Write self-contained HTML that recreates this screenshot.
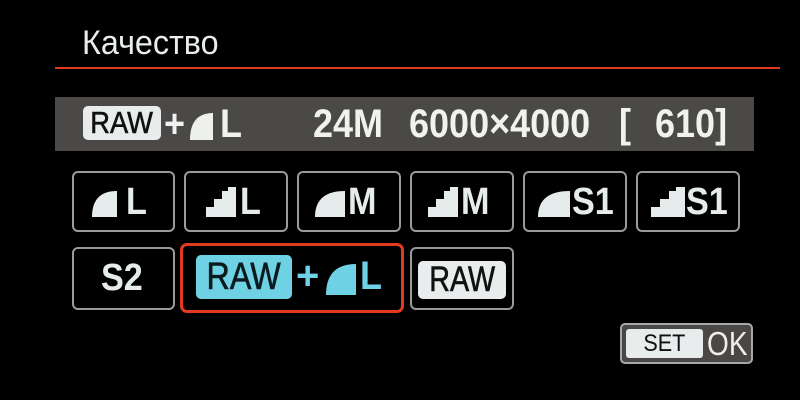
<!DOCTYPE html>
<html><head><meta charset="utf-8"><style>
*{margin:0;padding:0;box-sizing:border-box}
body{width:800px;height:400px;background:#000;position:relative;overflow:hidden;font-family:"Liberation Sans",sans-serif;color:#e6ecec}
.a{position:absolute}
.title{left:82px;top:24px;font-size:34px;color:#e8ecea;transform:scaleX(.95);transform-origin:left}
.line{left:55px;top:67px;width:725px;height:2px;background:#e03a22}
.bar{left:55px;top:97px;width:699px;height:54px;background:#4b4947}
.bt{font-weight:bold;font-size:40px;top:101px;color:#f0f2f0;transform:scaleX(.9);transform-origin:left;line-height:46px}
.box{border:2px solid #9a9a9a;border-radius:6px;background:#000}
.raw{background:#e8ecec;color:#111;border-radius:5px;text-align:center;-webkit-text-stroke:0.6px currentColor}
.L{font-weight:bold;color:#e6ecec;font-size:38px;line-height:40px;top:182px;transform:scaleX(.9);transform-origin:left}
svg{position:absolute}
</style></head><body>
<div class="a title">Качество</div>
<div class="a line"></div>
<div class="a bar"></div>
<div class="a raw" style="left:83px;top:106px;width:78px;height:34px;font-size:31px;line-height:34px"><span style="display:inline-block;transform:scaleX(.88)">RAW</span></div>
<div class="a bt" style="left:164px;">+</div>
<svg style="left:190px;top:113px" width="23" height="27" viewBox="0 0 23 27"><path d="M0 27 Q0 0 23 0 V27Z" fill="#eef0ee"/></svg>
<div class="a bt" style="left:220px;">L</div>
<div class="a bt" style="left:313px;">24M</div>
<div class="a bt" style="left:409px;">6000×4000</div>
<div class="a bt" style="left:619px;">[</div>
<div class="a bt" style="left:655px;">610]</div>

<div class="a box" style="left:72px;top:171px;width:103px;height:61px"></div>
<div class="a box" style="left:184px;top:171px;width:104px;height:61px"></div>
<div class="a box" style="left:297px;top:171px;width:104px;height:61px"></div>
<div class="a box" style="left:410px;top:171px;width:104px;height:61px"></div>
<div class="a box" style="left:523px;top:171px;width:104px;height:61px"></div>
<div class="a box" style="left:636px;top:171px;width:104px;height:61px"></div>

<svg style="left:92px;top:191px" width="25" height="26" viewBox="0 0 25 26"><path d="M0 26 Q0 0 25 0 V26Z" fill="#e6ecec"/></svg>
<svg style="left:206px;top:187px" width="30" height="30" viewBox="0 0 30 30"><path d="M0 30 V20 H8 V12 H16 V4 H22 V0 H30 V30Z" fill="#e6ecec"/></svg>
<svg style="left:315px;top:191px" width="30" height="26" viewBox="0 0 30 26"><path d="M0 26 Q0 0 30 0 V26Z" fill="#e6ecec"/></svg>
<svg style="left:428px;top:187px" width="30" height="30" viewBox="0 0 30 30"><path d="M0 30 V20 H8 V12 H16 V4 H22 V0 H30 V30Z" fill="#e6ecec"/></svg>
<svg style="left:538px;top:191px" width="32" height="26" viewBox="0 0 32 26"><path d="M0 26 Q0 0 32 0 V26Z" fill="#e6ecec"/></svg>
<svg style="left:651px;top:187px" width="34" height="30" viewBox="0 0 34 30"><path d="M0 30 V20 H9 V12 H18 V4 H25 V0 H34 V30Z" fill="#e6ecec"/></svg>

<div class="a L" style="left:126px;">L</div>
<div class="a L" style="left:240px;">L</div>
<div class="a L" style="left:348px;">M</div>
<div class="a L" style="left:461px;">M</div>
<div class="a L" style="left:572px;">S1</div>
<div class="a L" style="left:686px;">S1</div>

<div class="a box" style="left:72px;top:247px;width:103px;height:63px"></div>
<div class="a L" style="left:101px;top:258px;">S2</div>
<div class="a" style="left:180px;top:243px;width:224px;height:70px;border:3px solid #e23a20;border-radius:7px"></div>
<div class="a raw" style="left:196px;top:255px;width:96px;height:44px;background:#6fd2e4;font-size:38px;line-height:44px;color:#0a1a1e"><span style="display:inline-block;transform:scaleX(.85)">RAW</span></div>
<div class="a" style="left:296px;top:254px;font-size:40px;line-height:44px;font-weight:bold;color:#6fd2e4">+</div>
<svg style="left:326px;top:264px" width="30" height="31" viewBox="0 0 30 31"><path d="M0 31 Q0 0 30 0 V31Z" fill="#6fd2e4"/></svg>
<div class="a" style="left:360px;top:254px;font-size:40px;line-height:44px;font-weight:bold;color:#6fd2e4;transform:scaleX(.9);transform-origin:left">L</div>
<div class="a box" style="left:410px;top:247px;width:104px;height:63px"></div>
<div class="a raw" style="left:418px;top:261px;width:88px;height:38px;font-size:35px;line-height:38px"><span style="display:inline-block;transform:scaleX(.82)">RAW</span></div>

<div class="a" style="left:620px;top:323px;width:133px;height:41px;background:#4b4746;border:2px solid #a8a8a8;border-radius:5px"></div>
<div class="a" style="left:626px;top:329px;width:77px;height:29px;background:#e8ecec;border-radius:3px;color:#111;font-size:24px;text-align:center;line-height:30px"><span style="display:inline-block;transform:scaleX(.9)">SET</span></div>
<div class="a" style="left:707px;top:325px;font-size:33px;line-height:38px;color:#eef0ee;transform:scaleX(.85);transform-origin:left">OK</div>
</body></html>
